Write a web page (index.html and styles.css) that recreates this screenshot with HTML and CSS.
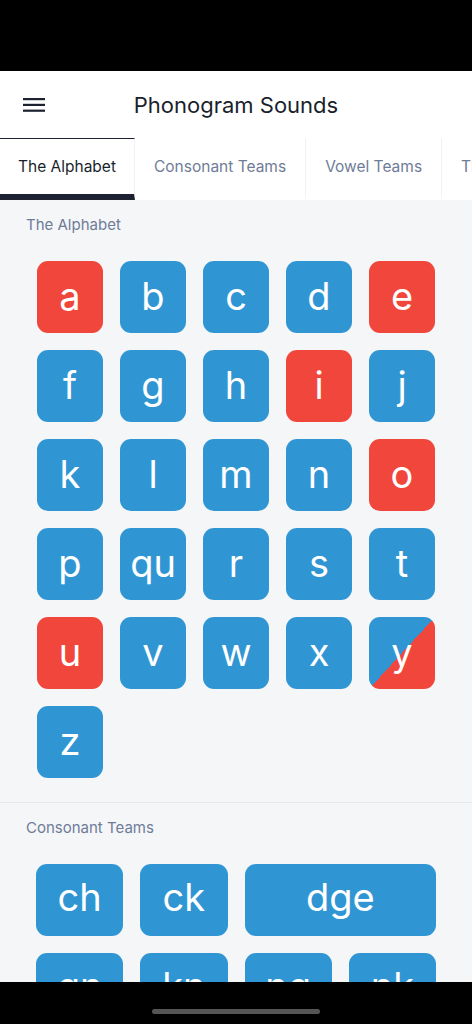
FILE: index.html
```html
<!DOCTYPE html>
<html lang="en">
<head>
<meta charset="utf-8">
<title>Phonogram Sounds</title>
<link rel="stylesheet" href="styles.css">
</head>
<body>
<div class="screen">
  <div class="statusbar"></div>
  <header class="appbar">
    <button class="menu" aria-label="Menu">
      <svg width="22" height="14" viewBox="0 0 22 14"><rect x="0" y="0" width="22" height="2.2" fill="#1c2230"/><rect x="0" y="5.8" width="22" height="2.2" fill="#1c2230"/><rect x="0" y="11.6" width="22" height="2.2" fill="#1c2230"/></svg>
    </button>
    <h1 class="title">Phonogram Sounds</h1>
    <div></div>
  </header>
  <nav class="tabs">
    <div class="tab active">The Alphabet</div>
    <div class="tab">Consonant Teams</div>
    <div class="tab">Vowel Teams</div>
    <div class="tab">The R-Controlled</div>
  </nav>
  <main class="content">
    <section class="section">
      <h2 class="label">The Alphabet</h2>
      <div class="grid five">
        <div class="tile red">a</div>
        <div class="tile">b</div>
        <div class="tile">c</div>
        <div class="tile">d</div>
        <div class="tile red">e</div>
        <div class="tile">f</div>
        <div class="tile">g</div>
        <div class="tile">h</div>
        <div class="tile red">i</div>
        <div class="tile">j</div>
        <div class="tile">k</div>
        <div class="tile">l</div>
        <div class="tile">m</div>
        <div class="tile">n</div>
        <div class="tile red">o</div>
        <div class="tile">p</div>
        <div class="tile">qu</div>
        <div class="tile">r</div>
        <div class="tile">s</div>
        <div class="tile">t</div>
        <div class="tile red">u</div>
        <div class="tile">v</div>
        <div class="tile">w</div>
        <div class="tile">x</div>
        <div class="tile split">y</div>
        <div class="tile">z</div>
      </div>
    </section>
    <section class="section">
      <h2 class="label">Consonant Teams</h2>
      <div class="grid four">
        <div class="tile">ch</div>
        <div class="tile">ck</div>
        <div class="tile wide">dge</div>
        <div class="tile">gn</div>
        <div class="tile">kn</div>
        <div class="tile">ng</div>
        <div class="tile">nk</div>
      </div>
    </section>
  </main>
  <div class="navbar"><span class="pill"></span></div>
</div>
</body>
</html>
```
FILE: styles.css
```css
* { box-sizing: border-box; }
html, body { margin: 0; padding: 0; }
body {
  font-family: Inter, "Noto Sans", "Liberation Sans", sans-serif;
  background: #f5f6f8;
}
.screen {
  position: relative;
  width: 472px;
  height: 1024px;
  overflow: hidden;
  background: #f5f6f8;
}
.statusbar {
  height: 71px;
  background: #000;
}
.appbar {
  height: 67px;
  background: #fff;
  display: grid;
  grid-template-columns: 1fr auto 1fr;
  align-items: center;
}
.menu {
  justify-self: start;
  margin-left: 23px;
  padding: 0;
  border: 0;
  background: none;
  display: flex;
  margin-top: 1px;
}
.title {
  margin: 0;
  font-size: 22px;
  font-weight: 400;
  color: #1a1f2c;
}
.tabs {
  height: 62px;
  background: #fff;
  display: flex;
  flex-wrap: nowrap;
  overflow: hidden;
}
.tab {
  flex: none;
  height: 62px;
  display: flex;
  align-items: center;
  padding: 0 19px;
  font-size: 15.5px;
  color: #6f7c98;
  border-top: 1.5px solid transparent;
  border-bottom: 6px solid transparent;
  border-right: 1px solid #eef0f3;
}
.tab.active {
  color: #1a1f2c;
  border-top-color: #1c2232;
  border-bottom-color: #1c2232;
  padding: 0 18px;
}
.content {
  background: #f5f6f8;
}
.section {
  padding: 15px 36px 24px 36px;
  border-bottom: 1px solid #e7e9ed;
}
.label {
  margin: 0 0 26px -10px;
  font-size: 15px;
  line-height: 20px;
  font-weight: 400;
  color: #6f7c98;
}
.grid {
  display: grid;
  gap: 17px;
  grid-auto-rows: 72px;
}
.grid.five {
  grid-template-columns: repeat(5, 1fr);
  padding: 0 1px;
}
.grid.four {
  grid-template-columns: repeat(4, 1fr);
}
.tile {
  background: #3096d3;
  color: #fff;
  border-radius: 11px;
  display: flex;
  align-items: center;
  justify-content: center;
  font-size: 38px;
  line-height: 1;
  padding-bottom: 2px;
}
.grid.four .tile {
  padding-bottom: 6px;
}
.tile.red {
  background: #f1463b;
}
.tile.split {
  background: linear-gradient(to bottom right, #3096d3 50%, #f1463b 50%);
}
.tile.wide {
  grid-column: span 2;
}
.navbar {
  position: absolute;
  left: 0;
  right: 0;
  bottom: 0;
  height: 42px;
  background: #000;
  display: flex;
  justify-content: center;
  align-items: flex-end;
  padding-bottom: 10px;
}
.pill {
  width: 168px;
  height: 5px;
  border-radius: 3px;
  background: #555;
}
```
